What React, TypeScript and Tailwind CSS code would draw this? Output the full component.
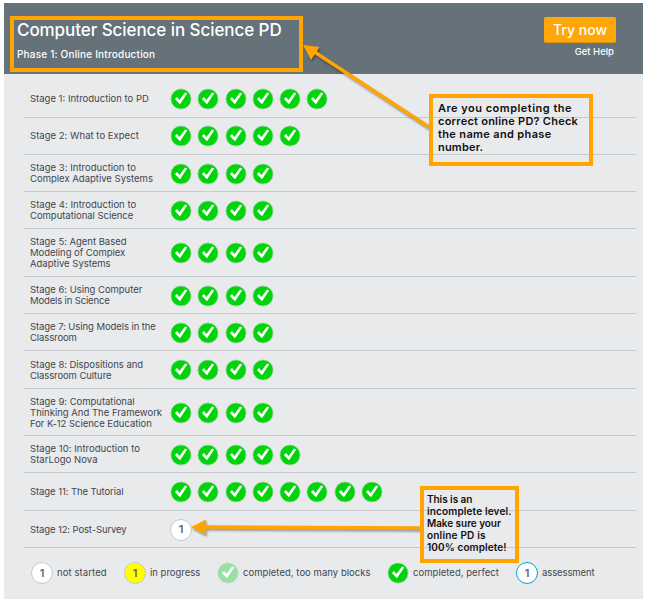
import React from "react";

type Stage = { lines: string[]; spacing: string[]; levels: number; height: string; lift?: boolean; open?: boolean };

const stages: Stage[] = [
  { lines: ["Stage 1: Introduction to PD"], spacing: ["tracking-[0px]"], levels: 6, height: "h-[37px]", lift: true },
  { lines: ["Stage 2: What to Expect"], spacing: ["tracking-[0.03px]"], levels: 5, height: "h-[37px]", lift: true },
  { lines: ["Stage 3: Introduction to", "Complex Adaptive Systems"], spacing: ["tracking-[0.03px]", "tracking-[0px]"], levels: 4, height: "h-[37px]" },
  { lines: ["Stage 4: Introduction to", "Computational Science"], spacing: ["tracking-[0.03px]", "tracking-[-0.03px]"], levels: 4, height: "h-[37px]" },
  { lines: ["Stage 5: Agent Based", "Modeling of Complex", "Adaptive Systems"], spacing: ["tracking-[-0.03px]", "tracking-[-0.03px]", "tracking-[0px]"], levels: 4, height: "h-[48px]" },
  { lines: ["Stage 6: Using Computer", "Models in Science"], spacing: ["tracking-[-0.03px]", "tracking-[-0.15px]"], levels: 4, height: "h-[37px]" },
  { lines: ["Stage 7: Using Models in the", "Classroom"], spacing: ["tracking-[-0.08px]", "tracking-[-0.1px]"], levels: 4, height: "h-[37px]" },
  { lines: ["Stage 8: Dispositions and", "Classroom Culture"], spacing: ["tracking-[-0.04px]", "tracking-[-0.1px]"], levels: 4, height: "h-[38px]" },
  { lines: ["Stage 9: Computational", "Thinking And The Framework", "For K-12 Science Education"], spacing: ["tracking-[-0.03px]", "tracking-[0px]", "tracking-[-0.03px]"], levels: 4, height: "h-[47px]" },
  { lines: ["Stage 10: Introduction to", "StarLogo Nova"], spacing: ["tracking-[0.03px]", "tracking-[0.05px]"], levels: 5, height: "h-[37px]" },
  { lines: ["Stage 11: The Tutorial"], spacing: ["tracking-[-0.08px]"], levels: 8, height: "h-[38px]" },
  { lines: ["Stage 12: Post-Survey"], spacing: ["tracking-[-0.12px]"], levels: 0, height: "h-[37px]", open: true },
];

function Check({ pale = false }: { pale?: boolean }) {
  return (
    <svg viewBox="0 0 22 22" className="size-[22px] shrink-0">
      <circle cx="11" cy="11" r="10.1" fill={pale ? "#99e0a6" : "#02d40b"} stroke={pale ? "#c0d8c8" : "#a9d3b3"} strokeWidth="0.7" />
      <path d="M4.9 11 L7 9.1 L9.5 12 L15 4.5 L17.2 5.4 L10 16.3 Z" fill="#fff" />
    </svg>
  );
}

function Bubble({ tone }: { tone: string }) {
  return (
    <span className={`flex size-[22px] shrink-0 items-center justify-center rounded-full border text-[11px] leading-none font-semibold text-[#5b6770] ${tone}`}>
      1
    </span>
  );
}

export default function App() {
  return (
    <div className="relative h-[603px] w-[647px] overflow-hidden bg-white pt-[3px] pl-1 font-['Inter','Liberation_Sans',sans-serif]">
      <main className="flex h-[596px] w-[639px] flex-col bg-[#e9eaec]">
        <header className="flex h-[71px] shrink-0 justify-between bg-[#65727a] text-white">
          <div className="pt-[17px] pl-[13px] whitespace-nowrap">
            <h1 className="text-[17px] leading-5 font-medium tracking-[-0.07px]">Computer Science in Science PD</h1>
            <p className="mt-[8px] text-[10px] leading-3 font-medium tracking-[0.19px]">Phase 1: Online Introduction</p>
          </div>
          <div className="flex flex-col items-end pt-[14px] pr-[27px]">
            <button className="h-[26px] w-[72px] rounded-[2px] border-b border-[#dc950e] bg-[#ffa70a] text-[14px] leading-5 font-medium whitespace-nowrap">Try now</button>
            <a className="mt-[3px] pr-[2px] text-[9.5px] leading-3 font-medium whitespace-nowrap">Get Help</a>
          </div>
        </header>
        <section className="flex flex-col pt-[7px] pr-[7px] pl-5">
          {stages.map((stage) => (
            <div key={stage.lines[0]} className={`flex shrink-0 items-center border-b border-[#c6cacf] pl-[6px] ${stage.height}`}>
              <div className={`w-[140px] shrink-0 text-[9.5px] leading-[11px] whitespace-nowrap text-[#41464e] ${stage.lift ? "pb-[1px]" : ""}`}>
                {stage.lines.map((line, i) => (
                  <div key={line}><span className={stage.spacing[i]}>{line}</span></div>
                ))}
              </div>
              <div className={`flex gap-[5.3px] ${stage.lift ? "pb-[1px]" : "pt-[1px]"}`}>
                {Array.from({ length: stage.levels }, (_, i) => <Check key={i} />)}
                {stage.open && <Bubble tone="border-[#c6cacd] bg-white" />}
              </div>
            </div>
          ))}
        </section>
        <footer className="flex h-[50px] items-center pl-[27px] text-[9.5px] whitespace-nowrap text-[#41464e]">
          <div className="flex w-[93px] shrink-0 items-center gap-1"><Bubble tone="border-[#c6cacd] bg-white" /><span className="tracking-[0.1px]">not started</span></div>
          <div className="flex w-[93px] shrink-0 items-center gap-1"><Bubble tone="border-[#c6cacd] bg-[#ffff00]" /><span className="tracking-[0px]">in progress</span></div>
          <div className="flex w-[170px] shrink-0 items-center gap-1"><Check pale /><span className="tracking-[0.04px]">completed, too many blocks</span></div>
          <div className="flex w-[129px] shrink-0 items-center gap-1"><Check /><span className="tracking-[0.03px]">completed, perfect</span></div>
          <div className="flex shrink-0 items-center gap-1"><Bubble tone="border-[#00a5d4] bg-white" /><span className="tracking-[-0.1px]">assessment</span></div>
        </footer>
      </main>

      <div className="absolute top-4 left-[10px] h-14 w-[293px] border-4 border-[#ffa400]" />
      <svg className="absolute inset-0 size-full drop-shadow-[1px_2px_1px_rgba(0,0,0,0.35)]" viewBox="0 0 647 603">
        <path d="M429 127 L313 51" stroke="#ffa400" strokeWidth="3.5" />
        <path d="M303 45 L319.5 47 L311 60 Z" fill="#ffa400" />
        <path d="M421 528 L204 527" stroke="#ffa400" strokeWidth="3.5" />
        <path d="M191 527 L206 519.5 L206 535 Z" fill="#ffa400" />
      </svg>
      <div className="absolute top-[94px] left-[429px] h-[72px] w-[164px] border-4 border-[#ffa400] pt-[4px] pl-[5px] text-[11px] leading-[13px] font-semibold whitespace-nowrap text-[#111]">
        <div><span className="tracking-[0.48px]">Are you completing the</span></div>
        <div><span className="tracking-[0.24px]">correct online PD? Check</span></div>
        <div><span className="tracking-[0.35px]">the name and phase</span></div>
        <div><span className="tracking-[0.2px]">number.</span></div>
      </div>
      <div className="absolute top-[486px] left-[420px] h-[77px] w-[99px] border-4 border-[#ffa400] pt-[3px] pl-[3px] text-[10px] leading-3 font-semibold whitespace-nowrap text-[#111]">
        <div><span className="tracking-[-0.05px]">This is an</span></div>
        <div><span className="tracking-[0.15px]">incomplete level.</span></div>
        <div><span className="tracking-[-0.05px]">Make sure your</span></div>
        <div><span className="tracking-[0.2px]">online PD is</span></div>
        <div><span className="tracking-[0.1px]">100% complete!</span></div>
      </div>
    </div>
  );
}
